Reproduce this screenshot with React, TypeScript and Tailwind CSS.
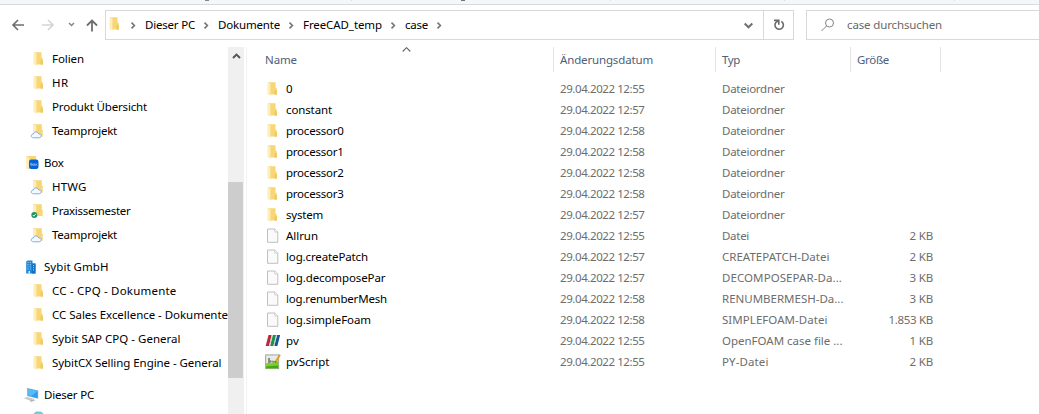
import { useLayoutEffect, useRef, useState } from 'react';
import type { ReactNode } from 'react';

/** A single line of text whose tracking is tuned so that it spans `w` pixels. */
function Label({ text, w }: { text: string; w: number }) {
  const ref = useRef<HTMLSpanElement>(null);
  const [spacing, setSpacing] = useState(0);
  useLayoutEffect(() => {
    if (ref.current) {
      const natural = ref.current.getBoundingClientRect().width;
      setSpacing((w - natural) / text.length);
    }
  }, [text, w]);
  return (
    <span ref={ref} className="shrink-0 justify-self-start whitespace-pre" style={{ letterSpacing: `${spacing}px` }}>
      {text}
    </span>
  );
}

function FolderShape() {
  return (
    <>
      <path d="M3.200 1.200h7.300v5l1.200 1v6.300H5.500L3.200 13z" fill="#f7d675" />
      <path d="M2.500 1.200l2.900 1v12.300L2.500 13.200z" fill="#fdeeb8" />
      <path d="M9.700 9.500l2.100-.8v5H9.700z" fill="#efc75c" />
      <path d="M5.400 2.200v12" stroke="#f8e09a" strokeWidth="0.6" />
    </>
  );
}

function Cloud() {
  return (
    <path
      d="M2.600 14.800c-1.600 0-2.300-.8-2.300-1.900 0-1.200.9-1.900 2-1.800.3-1.500 1.400-2.200 2.600-2.200 1.400 0 2.300.8 2.600 2 1.700 0 2.800.7 2.800 2 0 1.200-.9 1.900-2.100 1.900z"
      fill="#f4f8ff"
      stroke="#86aee6"
      strokeWidth="1"
    />
  );
}

type IconName = 'folder' | 'cloud' | 'synced' | 'box' | 'company' | 'pc' | 'objects' | 'file' | 'paraview' | 'script';

function Icon({ name }: { name: IconName }) {
  let content: ReactNode = null;
  if (name === 'folder') content = <FolderShape />;
  if (name === 'cloud')
    content = (
      <>
        <path d="M2 1.300h8.800v5l.9 1v6.200H8L2 11z" fill="#f7d675" />
        <path d="M2 1.300l3.300 1v9L2 11z" fill="#fdeeb8" />
        <Cloud />
      </>
    );
  if (name === 'synced')
    content = (
      <>
        <path d="M2 1.300h8.800v5l.9 1v5.800H5.500L2 12z" fill="#f7d675" />
        <path d="M2 1.300l3.300 1v11L2 12z" fill="#fdeeb8" />
        <circle cx="3.300" cy="12" r="3" fill="#249165" />
        <path d="M1.800 12l1.100 1.200 1.900-2.300" stroke="#fff" strokeWidth="0.9" fill="none" />
      </>
    );
  if (name === 'box')
    content = (
      <>
        <path d="M1 1.500l2-.5h8v10L3.500 14 1 13z" fill="#f7d675" />
        <path d="M1 1.500l3 1V14l-3-1z" fill="#fdeeb8" />
        <rect x="4" y="4.500" width="9.500" height="9.500" rx="2.200" fill="#0561d6" />
        <path d="M5.800 7.600v2.500M12 8.500l-1.700 2.200M10.300 8.500l1.700 2.200" stroke="#b9d7ff" strokeWidth="0.6" />
        <circle cx="6.700" cy="9.600" r="0.9" fill="none" stroke="#b9d7ff" strokeWidth="0.6" />
        <circle cx="8.900" cy="9.600" r="0.9" fill="none" stroke="#b9d7ff" strokeWidth="0.6" />
      </>
    );
  if (name === 'company')
    content = (
      <>
        <path d="M1.200 2.500l1.500-1h4.800v3h3v10H1.200z" fill="#1c86dc" />
        <path d="M7 4.500h3.500v10H7z" fill="#1272c6" />
        <path d="M2.500 3.500h1M4.800 3.500h1M2.500 5.700h1M4.800 5.700h1M2.500 7.900h1M4.800 7.900h1M2.500 10.100h1M4.800 10.100h1M8 6.500h1M8 8.700h1M8 10.900h1" stroke="#a8dcff" strokeWidth="1" />
        <path d="M3.500 12H5v2.500H3.500z" fill="#d8f0ff" />
      </>
    );
  if (name === 'pc')
    content = (
      <>
        <path d="M2.200 1l11 2.500v8.300L2.200 9z" fill="#8fa7b8" />
        <path d="M2.900 1.800l9.700 2.300v6.800L2.900 8.500z" fill="#2ba0ee" />
        <path d="M2.900 1.800l9.700 2.300-6.200 5-3.500-.8z" fill="#55bbfa" />
        <path d="M-1.500 11.300L2.500 10l6.500 2.100-3.800 1.500z" fill="#c5c9cd" />
        <path d="M4.500 13.700l4-1.500 2 1L6 14.900z" fill="#b3b7bb" />
      </>
    );
  if (name === 'objects')
    content = (
      <>
        <path d="M1 4.500L5 .8h5l4 3.700v7l-6 4-7-4z" fill="#37b5cc" />
        <path d="M1 4.500L5 .8h5l4 3.700-6.500 3z" fill="#65d1e2" />
      </>
    );
  if (name === 'file')
    content = (
      <>
        <path d="M2.500 1h7.500l2.800 2.800v10.500H2.500z" fill="#fafafa" stroke="#b9b9b9" strokeWidth="0.9" />
        <path d="M9.800 1v3h3" fill="#fff" stroke="#c4c4c4" strokeWidth="0.8" />
      </>
    );
  if (name === 'paraview')
    content = (
      <>
        <path d="M3.500 2h3.200L4 13H.7z" fill="#c0253a" />
        <path d="M7.900 2h3.200L8.400 13H5.100z" fill="#219347" />
        <path d="M12.200 2h2.900l-2.700 11H9.300z" fill="#16559c" />
        <path d="M6.700 2h.8L4.800 13H4zM11.100 2h.8L9.200 13h-.8z" fill="#bcc7cf" />
      </>
    );
  if (name === 'script')
    content = (
      <>
        <rect x="0.700" y="0.900" width="13" height="13.800" fill="#e6ece3" stroke="#8b9489" strokeWidth="0.8" />
        <path d="M1.100 9c4 1.500 8-1 12.200-2v7.300H1.100z" fill="#78cf25" />
        <path d="M1.100 12.500l12.200-1v2.800H1.100z" fill="#43a812" />
        <path d="M4 4v5.500M5.800 6.500v2M8 6.800v1.700M10 7v1" stroke="#46503f" strokeWidth="1.200" fill="none" />
        <path d="M15 .7L10.500 8" stroke="#e59a20" strokeWidth="1.900" />
        <path d="M10.500 7l-.8 2 1.700-1z" fill="#4c4c38" />
      </>
    );
  return (
    <svg className="size-4 shrink-0 overflow-visible" viewBox="0 0 16 16">
      {content}
    </svg>
  );
}

function Crumb({ text, w }: { text?: string; w?: number }) {
  return (
    <div className="flex items-center">
      <svg className="mr-[8px] h-[7px] w-[7px]" viewBox="0 0 7 7">
        <path d="M1.500.6l2.900 2.900-2.900 2.900" fill="none" stroke="#757575" strokeWidth="1.600" />
      </svg>
      {text && w && <Label text={text} w={w} />}
    </div>
  );
}

type TreeEntry = { text?: string; w?: number; icon: IconName; top?: boolean };

const tree: TreeEntry[] = [
  { text: 'Folien', w: 32, icon: 'folder' },
  { text: 'HR', w: 16.5, icon: 'folder' },
  { text: 'Produkt Übersicht', w: 95, icon: 'folder' },
  { text: 'Teamprojekt', w: 65, icon: 'cloud' },
  { text: 'Box', w: 19.5, icon: 'box', top: true },
  { text: 'HTWG', w: 34.5, icon: 'cloud' },
  { text: 'Praxissemester', w: 78.5, icon: 'synced' },
  { text: 'Teamprojekt', w: 65, icon: 'cloud' },
  { text: 'Sybit GmbH', w: 64.5, icon: 'company', top: true },
  { text: 'CC - CPQ - Dokumente', w: 124.5, icon: 'folder' },
  { text: 'CC Sales Excellence - Dokumente', w: 176, icon: 'folder' },
  { text: 'Sybit SAP CPQ - General', w: 128.5, icon: 'folder' },
  { text: 'SybitCX Selling Engine - General', w: 169.5, icon: 'folder' },
  { text: 'Dieser PC', w: 50, icon: 'pc', top: true },
  { icon: 'objects' },
];

type FileEntry = { name: string; nw: number; time: string; type: string; tw: number; size?: string; icon: IconName };

const files: FileEntry[] = [
  { name: '0', nw: 7, time: '12:55', type: 'Dateiordner', tw: 62.5, icon: 'folder' },
  { name: 'constant', nw: 46, time: '12:57', type: 'Dateiordner', tw: 62.5, icon: 'folder' },
  { name: 'processor0', nw: 57.5, time: '12:58', type: 'Dateiordner', tw: 62.5, icon: 'folder' },
  { name: 'processor1', nw: 57.5, time: '12:58', type: 'Dateiordner', tw: 62.5, icon: 'folder' },
  { name: 'processor2', nw: 57.5, time: '12:58', type: 'Dateiordner', tw: 62.5, icon: 'folder' },
  { name: 'processor3', nw: 57.5, time: '12:58', type: 'Dateiordner', tw: 62.5, icon: 'folder' },
  { name: 'system', nw: 37, time: '12:57', type: 'Dateiordner', tw: 62.5, icon: 'folder' },
  { name: 'Allrun', nw: 32, time: '12:55', type: 'Datei', tw: 27, size: '2 KB', icon: 'file' },
  { name: 'log.createPatch', nw: 82, time: '12:57', type: 'CREATEPATCH-Datei', tw: 107.5, size: '2 KB', icon: 'file' },
  { name: 'log.decomposePar', nw: 99.5, time: '12:57', type: 'DECOMPOSEPAR-Da...', tw: 120, size: '3 KB', icon: 'file' },
  { name: 'log.renumberMesh', nw: 101, time: '12:58', type: 'RENUMBERMESH-Da...', tw: 121.5, size: '3 KB', icon: 'file' },
  { name: 'log.simpleFoam', nw: 85, time: '12:58', type: 'SIMPLEFOAM-Datei', tw: 105.5, size: '1.853 KB', icon: 'file' },
  { name: 'pv', nw: 13, time: '12:55', type: 'OpenFOAM case file ...', tw: 120.5, size: '1 KB', icon: 'paraview' },
  { name: 'pvScript', nw: 43.5, time: '12:55', type: 'PY-Datei', tw: 46.5, size: '2 KB', icon: 'script' },
];

export default function App() {
  return (
    <div className="flex h-[414px] w-[1039px] flex-col overflow-hidden bg-white font-['Noto_Sans','Open_Sans',sans-serif] text-[11.5px] leading-[16px] text-black">
      <div className="flex h-[5px] shrink-0 border-b border-[#d9dadb] bg-[#f5f6f7]">
        <span className="ml-[205px] h-px w-[4px] bg-[#7f8793]" />
        <span className="ml-[142px] h-px w-px bg-[#dcdddf]" />
        <span className="ml-[109px] h-px w-[4px] bg-[#6d7686]" />
        <span className="ml-[145px] h-px w-px bg-[#dcdddf]" />
        <span className="ml-[173px] h-px w-px bg-[#dcdddf]" />
        <span className="ml-[169px] h-px w-px bg-[#dcdddf]" />
      </div>

      <div className="flex h-[42px] shrink-0 pt-[5px]">
        <div className="flex h-[30px] w-[105px] shrink-0 items-center">
          <svg className="h-[30px] w-[105px]" viewBox="0 0 105 30" fill="none">
            <path d="M24 15H13M18 10l-5 5 5 5" stroke="#6e6e6e" strokeWidth="1.600" />
            <path d="M42 15h11M48 10l5 5-5 5" stroke="#d5d5d5" strokeWidth="1.600" />
            <path d="M69 13l2.500 2.500L74 13" stroke="#858585" strokeWidth="1.500" />
            <path d="M92 21.500V11M87 15.500l5-5 5 5" stroke="#6e6e6e" strokeWidth="1.800" />
          </svg>
        </div>
        <div className="flex h-[30px] w-[689px] shrink-0 border border-[#d9d9d9]">
          <div className="flex flex-1 items-center">
            <div className="mr-[7px] ml-[1px] -mt-[2px]">
              <Icon name="folder" />
            </div>
            <div className="flex items-center gap-[8px]">
              <Crumb text="Dieser PC" w={50} />
              <Crumb text="Dokumente" w={62} />
              <Crumb text="FreeCAD_temp" w={79} />
              <Crumb text="case" w={23} />
              <Crumb />
            </div>
          </div>
          <div className="flex w-[30px] items-center justify-center">
            <svg className="mt-[2px] h-[8px] w-[11px]" viewBox="0 0 11 8">
              <path d="M1.700 1.500l3.800 3.800 3.800-3.800" fill="none" stroke="#707070" strokeWidth="2" />
            </svg>
          </div>
          <div className="flex w-[30px] items-center justify-center border-l border-[#d9d9d9]">
            <svg className="size-[12px]" viewBox="0 0 12 12" fill="none" stroke="#696969" strokeWidth="1.600">
              <path d="M8.300 2.400A4.200 4.200 0 1 1 3 3.300L5.400 1.700" />
              <path d="M1 1.400h4.800v4.400" />
            </svg>
          </div>
        </div>
        <div className="ml-[12px] flex h-[30px] w-[260px] shrink-0 items-center border border-[#d9d9d9] text-[#686868]">
          <svg className="mr-[12px] ml-[14px] size-[14px]" viewBox="0 0 14 14" fill="none" stroke="#858585">
            <circle cx="8.500" cy="5" r="4" />
            <path d="M5.500 8L.5 13" />
          </svg>
          <Label text="case durchsuchen" w={95} />
        </div>
      </div>

      <div className="flex min-h-0 flex-1">
        <div className="flex w-[247px] shrink-0 border-r border-[#f2f2f2]">
          <div className="w-[228px] overflow-hidden">
            {tree.map((t, i) => (
              <div
                key={i}
                className={t.top ? 'mt-[8px] flex h-[24px] items-center gap-[3px] pl-[25px]' : 'flex h-[24px] items-center gap-[5px] pl-[31px]'}
              >
                <Icon name={t.icon} />
                {t.text && t.w && <Label text={t.text} w={t.w} />}
              </div>
            ))}
          </div>
          <div className="h-full w-[16px] bg-[#f0f0f0]">
            <div className="flex h-[135px] justify-center pt-[5px]">
              <svg className="h-[8px] w-[9px]" viewBox="0 0 9 8">
                <path d="M1 6l3.500-3.500L8 6" fill="none" stroke="#555" strokeWidth="1.900" />
              </svg>
            </div>
            <div className="h-[196px] w-[15px] bg-[#cdcdcd]" />
          </div>
        </div>

        <div className="flex-1">
          <div className="flex h-[25px] items-center text-[#4c607a]">
            <div className="relative flex h-full w-[307px] items-center border-r border-[#e5e5e5] pl-[18px]">
              <Label text="Name" w={32} />
              <svg className="absolute top-0 left-[155px] h-[5px] w-[9px]" viewBox="0 0 9 5">
                <path d="M.7 4.500l3.800-3.800 3.800 3.800" fill="none" stroke="#666" strokeWidth="1.100" />
              </svg>
            </div>
            <div className="flex h-full w-[162px] items-center border-r border-[#e5e5e5] pl-[6px]">
              <Label text="Änderungsdatum" w={93} />
            </div>
            <div className="flex h-full w-[135px] items-center border-r border-[#e5e5e5] pl-[6px]">
              <Label text="Typ" w={18} />
            </div>
            <div className="flex h-full w-[90px] items-center border-r border-[#e5e5e5] pl-[6px]">
              <Label text="Größe" w={32} />
            </div>
          </div>
          <div className="pt-[6px] text-[#6d6d6d]">
            {files.map((f) => (
              <div key={f.name} className="grid h-[21px] grid-cols-[295px_162px_135px_76px] items-center pl-[18px]">
                <div className="flex items-center gap-[5px] text-black">
                  <Icon name={f.icon} />
                  <Label text={f.name} w={f.nw} />
                </div>
                <Label text={`29.04.2022 ${f.time}`} w={84.5} />
                <Label text={f.type} w={f.tw} />
                <div className="flex justify-end">{f.size && <Label text={f.size} w={f.size.length > 4 ? 44.5 : 23.5} />}</div>
              </div>
            ))}
          </div>
        </div>
      </div>
    </div>
  );
}
